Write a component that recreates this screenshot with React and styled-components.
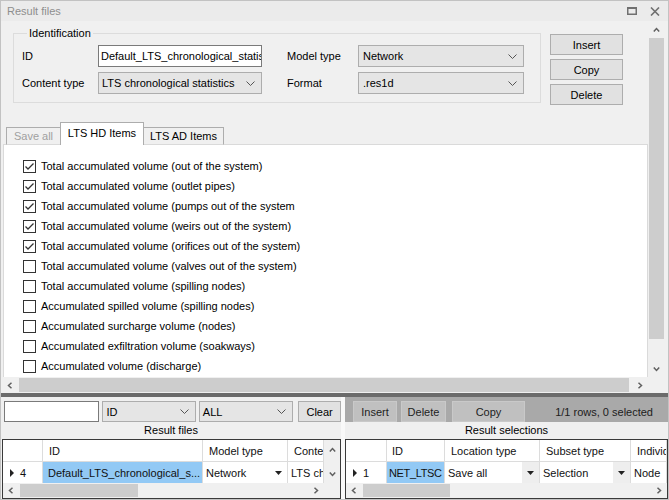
import React from 'react';
import styled, { createGlobalStyle } from 'styled-components';

const GlobalStyle = createGlobalStyle`
  html, body { margin: 0; padding: 0; background: #f0f0f0; }
  body { font-family: "Liberation Sans", Arial, sans-serif; font-size: 11px; color: #000; }
  * { box-sizing: border-box; }
`;

const Window = styled.div`
  width: 669px;
  height: 500px;
  display: flex;
  flex-direction: column;
  background: #f0f0f0;
  border: 1px solid #c2c2c2;
  overflow: hidden;
`;

const TitleBar = styled.div`
  height: 20px;
  flex: 0 0 20px;
  display: flex;
  align-items: center;
  padding: 0 8px 0 6px;
  background: #ebebeb;
  color: #8e8e8e;
  font-size: 11px;
`;

const TitleText = styled.span`
  flex: 1;
`;

const TitleControls = styled.div`
  display: flex;
  align-items: center;
  gap: 13px;
`;

const Upper = styled.div`
  flex: 0 0 372px;
  display: grid;
  grid-template-columns: 1fr 17px;
  grid-template-rows: 1fr 16px;
  padding-right: 3px;
`;

const ScrollContent = styled.div`
  display: flex;
  flex-direction: column;
  overflow: hidden;
  padding-left: 2px;
`;

const TopRow = styled.div`
  display: flex;
  align-items: flex-start;
  gap: 9px;
  padding: 6px 0 0 10px;
`;

const GroupBox = styled.fieldset`
  margin: 0;
  width: 528px;
  padding: 6px 16px 8px 8px;
  border: 1px solid #dcdcdc;
`;

const Legend = styled.legend`
  padding: 0 2px;
  margin-left: 5px;
  font-size: 11px;
`;

const FormGrid = styled.div`
  display: grid;
  grid-template-columns: 76px 164px 96px 166px;
  grid-auto-rows: 22px;
  row-gap: 5px;
  align-items: center;
`;

const Label = styled.div`
  padding-left: ${p => p.$indent || 0}px;
  white-space: nowrap;
`;

const TextBox = styled.div`
  height: ${p => p.$h || 22}px;
  width: ${p => (p.$w ? `${p.$w}px` : 'auto')};
  border: 1px solid #7a7a7a;
  background: #fff;
  padding: 0 2px;
  display: flex;
  align-items: center;
  white-space: nowrap;
  overflow: hidden;
`;

const Select = styled.div`
  height: ${p => p.$h || 22}px;
  width: ${p => (p.$w ? `${p.$w}px` : 'auto')};
  border: 1px solid #adadad;
  background: #e5e5e5;
  padding: 0 6px 0 ${p => p.$pl || 3}px;
  display: flex;
  align-items: center;
  justify-content: space-between;
  white-space: nowrap;
`;

const ButtonColumn = styled.div`
  display: flex;
  flex-direction: column;
  gap: 4px;
  margin-top: 7px;
`;

const Button = styled.div`
  width: ${p => p.$w || 73}px;
  height: ${p => p.$h || 21}px;
  border: 1px solid #adadad;
  background: #e1e1e1;
  display: flex;
  align-items: center;
  justify-content: center;
  margin-left: ${p => p.$ml || 0}px;
`;

const DarkButton = styled(Button)`
  background: #c0c0c0;
  border-color: #c9c9c9;
  color: #1e1e1e;
`;

const TabStrip = styled.div`
  display: flex;
  align-items: flex-end;
  height: 23px;
  margin-top: 17px;
  padding-left: 3px;
  margin-bottom: -1px;
  position: relative;
  z-index: 1;
`;

const Tab = styled.div`
  width: ${p => p.$w}px;
  height: ${p => (p.$active ? 23 : 18)}px;
  margin-left: ${p => (p.$first ? 0 : -1)}px;
  border: 1px solid #adadad;
  border-bottom: ${p => (p.$active ? 'none' : '1px solid #dadada')};
  background: ${p => (p.$active ? '#fff' : '#f0f0f0')};
  color: ${p => (p.$disabled ? '#a0a0a0' : '#000')};
  display: flex;
  align-items: center;
  justify-content: center;
  padding-bottom: ${p => (p.$active ? 2 : 0)}px;
  position: relative;
  z-index: ${p => (p.$active ? 2 : 1)};
`;

const Panel = styled.div`
  flex: 1;
  background: #fff;
  border: 1px solid #dadada;
  border-bottom: none;
  padding: 11px 0 0 19px;
  overflow: hidden;
`;

const CheckRow = styled.div`
  height: 20px;
  display: flex;
  align-items: center;
  gap: 5px;
  white-space: nowrap;
`;

const Box = styled.div`
  width: 13px;
  height: 13px;
  border: 1px solid #333;
  background: #fff;
  display: flex;
  align-items: center;
  justify-content: center;
`;

const VScroll = styled.div`
  display: flex;
  flex-direction: column;
  background: #f0f0f0;
`;

const HScroll = styled.div`
  display: flex;
  background: #f0f0f0;
  height: ${p => p.$h || 16}px;
`;

const ArrowCell = styled.div`
  flex: 0 0 ${p => p.$s || 17}px;
  display: flex;
  align-items: center;
  justify-content: center;
`;

const Thumb = styled.div`
  background: #cdcdcd;
  flex: 0 0 ${p => p.$len}px;
  margin: ${p => (p.$vertical ? '0 1px' : '1px 0')};
  margin-left: ${p => (p.$offset != null ? `${p.$offset}px` : undefined)};
`;

const Spacer = styled.div`
  flex: 1;
`;

const Corner = styled.div`
  background: #f0f0f0;
`;

const Splitter = styled.div`
  flex: 0 0 4px;
  background: #6b6b6b;
`;

const Bottom = styled.div`
  flex: 1;
  display: flex;
  min-height: 0;
`;

const Pane = styled.div`
  display: flex;
  flex-direction: column;
  width: ${p => (p.$w ? `${p.$w}px` : 'auto')};
  flex: ${p => (p.$w ? '0 0 auto' : '1')};
  min-width: 0;
`;

const Divider = styled.div`
  flex: 0 0 4px;
  background: #f9f9f9;
`;

const Toolbar = styled.div`
  height: 25px;
  flex: 0 0 25px;
  display: flex;
  align-items: flex-start;
  gap: ${p => p.$gap || 3}px;
  padding: 4px 0 0 ${p => p.$pl || 3}px;
  background: ${p => p.$bg || '#f0f0f0'};
`;

const StatusText = styled.div`
  margin-left: auto;
  margin-right: 15px;
  height: 21px;
  display: flex;
  align-items: center;
  color: #202020;
`;

const Caption = styled.div`
  height: 17px;
  flex: 0 0 17px;
  display: flex;
  align-items: center;
  justify-content: center;
  padding-bottom: 1px;
`;

const DataGrid = styled.div`
  display: grid;
  grid-template-columns: ${p => p.$cols};
  grid-template-rows: 22px 21px 15px;
  border: 1px solid #3a3a3a;
  background: #fff;
  height: 60px;
  overflow: hidden;
  margin-left: ${p => p.$ml || 0}px;
`;

const HeadCell = styled.div`
  border-right: 1px solid #dcdcdc;
  border-bottom: 1px solid #dcdcdc;
  padding-left: ${p => p.$pl || 6}px;
  display: flex;
  align-items: center;
  white-space: nowrap;
  overflow: hidden;
  min-width: 0;
  color: #111;
`;

const Cell = styled.div`
  border-right: 1px solid #dcdcdc;
  padding-left: ${p => p.$pl || 3}px;
  display: flex;
  align-items: center;
  white-space: nowrap;
  overflow: hidden;
  min-width: 0;
  background: ${p => (p.$selected ? '#92c9f5' : '#fff')};
  color: #111;
  letter-spacing: ${p => (p.$tight ? '-0.35px' : 'normal')};
`;

const RowHeadCell = styled(Cell)`
  padding-left: 7px;
  gap: 6px;
`;

const DropCell = styled(Cell)`
  justify-content: space-between;
  padding-right: 0;
`;

const DropButton = styled.div`
  width: 17px;
  height: 100%;
  flex: 0 0 17px;
  display: flex;
  align-items: center;
  justify-content: center;
  background: ${p => (p.$boxed ? '#eeeeee' : '#fff')};
`;

const GridVScroll = styled.div`
  grid-row: 1 / span 2;
  grid-column: ${p => p.$col};
  background: #f0f0f0;
  display: flex;
  flex-direction: column;
  justify-content: space-between;
  align-items: center;
  padding: 7px 0 6px;
`;

const GridHScroll = styled(HScroll)`
  grid-column: ${p => p.$span};
`;

const Chevron = ({ dir, color = '#606060' }) => {
  const vertical = dir === 'up' || dir === 'down';
  const pts = {
    up: '0.8,4.5 3.5,1.5 6.2,4.5',
    down: '0.8,1.5 3.5,4.5 6.2,1.5',
    left: '4.5,0.8 1.5,3.5 4.5,6.2',
    right: '1.5,0.8 4.5,3.5 1.5,6.2',
  }[dir];
  return (
    <svg width={vertical ? 7 : 6} height={vertical ? 6 : 7} viewBox={vertical ? '0 0 7 6' : '0 0 6 7'}>
      <polyline points={pts} fill="none" stroke={color} strokeWidth="1.5" />
    </svg>
  );
};

const SelectArrow = () => (
  <svg width="9" height="5" viewBox="0 0 9 5">
    <polyline points="0.5,0.5 4.5,4.5 8.5,0.5" fill="none" stroke="#555" strokeWidth="1" />
  </svg>
);

const SmallTriangle = () => (
  <svg width="7" height="4" viewBox="0 0 7 4">
    <polygon points="0,0 7,0 3.5,4" fill="#222" />
  </svg>
);

const RowPointer = () => (
  <svg width="4" height="8" viewBox="0 0 4 8">
    <polygon points="0,0 4,4 0,8" fill="#222" />
  </svg>
);

const Check = () => (
  <svg width="11" height="11" viewBox="0 0 11 11">
    <polyline points="1.5,5.5 4,8 9.5,2.5" fill="none" stroke="#333" strokeWidth="1.3" />
  </svg>
);

const items = [
  ['Total accumulated volume (out of the system)', true],
  ['Total accumulated volume (outlet pipes)', true],
  ['Total accumulated volume (pumps out of the system', true],
  ['Total accumulated volume (weirs out of the system)', true],
  ['Total accumulated volume (orifices out of the system)', true],
  ['Total accumulated volume (valves out of the system)', false],
  ['Total accumulated volume (spilling nodes)', false],
  ['Accumulated spilled volume (spilling nodes)', false],
  ['Accumulated surcharge volume (nodes)', false],
  ['Accumulated exfiltration volume (soakways)', false],
  ['Accumulated volume (discharge)', false],
];

export default function App() {
  return (
    <>
      <GlobalStyle />
      <Window>
        <TitleBar>
          <TitleText>Result files</TitleText>
          <TitleControls>
            <svg width="10" height="8" viewBox="0 0 10 8">
              <rect x="0.75" y="1" width="8.5" height="6.25" fill="none" stroke="#707070" strokeWidth="1.5" />
              <rect x="0" y="0" width="10" height="2" fill="#707070" />
            </svg>
            <svg width="10" height="9" viewBox="0 0 10 9">
              <path d="M1 0.5 L9 8.5 M9 0.5 L1 8.5" stroke="#707070" strokeWidth="1.6" />
            </svg>
          </TitleControls>
        </TitleBar>

        <Upper>
          <ScrollContent>
            <TopRow>
              <GroupBox>
                <Legend>Identification</Legend>
                <FormGrid>
                  <Label>ID</Label>
                  <TextBox>Default_LTS_chronological_statis</TextBox>
                  <Label $indent={25}>Model type</Label>
                  <Select $pl={4}>
                    <span>Network</span>
                    <SelectArrow />
                  </Select>
                  <Label>Content type</Label>
                  <Select>
                    <span>LTS chronological statistics</span>
                    <SelectArrow />
                  </Select>
                  <Label $indent={25}>Format</Label>
                  <Select $pl={4}>
                    <span>.res1d</span>
                    <SelectArrow />
                  </Select>
                </FormGrid>
              </GroupBox>
              <ButtonColumn>
                <Button>Insert</Button>
                <Button>Copy</Button>
                <Button>Delete</Button>
              </ButtonColumn>
            </TopRow>

            <TabStrip>
              <Tab $w={55} $first $disabled>Save all</Tab>
              <Tab $w={84} $active>LTS HD Items</Tab>
              <Tab $w={81}>LTS AD Items</Tab>
            </TabStrip>
            <Panel>
              {items.map(([text, checked]) => (
                <CheckRow key={text}>
                  <Box>{checked && <Check />}</Box>
                  <span>{text}</span>
                </CheckRow>
              ))}
            </Panel>
          </ScrollContent>

          <VScroll>
            <ArrowCell $s={17}><Chevron dir="up" /></ArrowCell>
            <Thumb $vertical $len={301} />
            <Spacer />
            <ArrowCell $s={17}><Chevron dir="down" /></ArrowCell>
          </VScroll>

          <HScroll>
            <ArrowCell $s={17}><Chevron dir="left" /></ArrowCell>
            <Thumb $len={610} $offset={1} />
            <Spacer />
            <ArrowCell $s={17}><Chevron dir="right" /></ArrowCell>
          </HScroll>
          <Corner />
        </Upper>

        <Splitter />

        <Bottom>
          <Pane $w={340}>
            <Toolbar>
              <TextBox $w={96} $h={21} />
              <Select $w={94} $h={21} $pl={3}>
                <span>ID</span>
                <SelectArrow />
              </Select>
              <Select $w={95} $h={21} $pl={3}>
                <span>ALL</span>
                <SelectArrow />
              </Select>
              <Button $w={43} $ml={2}>Clear</Button>
            </Toolbar>
            <Caption>Result files</Caption>
            <DataGrid $cols="40px 160px 85px minmax(0, 1fr) 16px" $ml={1}>
              <HeadCell />
              <HeadCell>ID</HeadCell>
              <HeadCell>Model type</HeadCell>
              <HeadCell>Content type</HeadCell>
              <GridVScroll $col={5}>
                <Chevron dir="up" />
                <Chevron dir="down" />
              </GridVScroll>
              <RowHeadCell><RowPointer /><span>4</span></RowHeadCell>
              <Cell $selected $pl={5}><span>Default_LTS_chronological_s...</span></Cell>
              <DropCell>
                <span>Network</span>
                <DropButton><SmallTriangle /></DropButton>
              </DropCell>
              <Cell><span>LTS chronological statistics</span></Cell>
              <GridHScroll $span="1 / span 4" $h={15}>
                <ArrowCell $s={15}><Chevron dir="left" /></ArrowCell>
                <Thumb $len={118} $offset={2} />
                <Spacer />
                <ArrowCell $s={17}><Chevron dir="right" /></ArrowCell>
              </GridHScroll>
              <Corner />
            </DataGrid>
          </Pane>

          <Divider />

          <Pane>
            <Toolbar $bg="#a9a9a9" $pl={8} $gap={4}>
              <DarkButton $w={44}>Insert</DarkButton>
              <DarkButton $w={45}>Delete</DarkButton>
              <DarkButton $w={73} $ml={2}>Copy</DarkButton>
              <StatusText>1/1 rows, 0 selected</StatusText>
            </Toolbar>
            <Caption>Result selections</Caption>
            <DataGrid $cols="41px 58px 95px 91px minmax(0, 1fr)">
              <HeadCell />
              <HeadCell $pl={5}>ID</HeadCell>
              <HeadCell>Location type</HeadCell>
              <HeadCell>Subset type</HeadCell>
              <HeadCell>Individual</HeadCell>
              <RowHeadCell><RowPointer /><span>1</span></RowHeadCell>
              <Cell $selected $pl={2} $tight><span>NET_LTSC</span></Cell>
              <DropCell>
                <span>Save all</span>
                <DropButton $boxed><SmallTriangle /></DropButton>
              </DropCell>
              <DropCell>
                <span>Selection</span>
                <DropButton $boxed><SmallTriangle /></DropButton>
              </DropCell>
              <Cell><span>Node</span></Cell>
              <GridHScroll $span="1 / span 5" $h={15}>
                <ArrowCell $s={15}><Chevron dir="left" /></ArrowCell>
                <Thumb $len={87} $offset={2} />
                <Spacer />
                <ArrowCell $s={17}><Chevron dir="right" /></ArrowCell>
              </GridHScroll>
            </DataGrid>
          </Pane>
        </Bottom>
      </Window>
    </>
  );
}
